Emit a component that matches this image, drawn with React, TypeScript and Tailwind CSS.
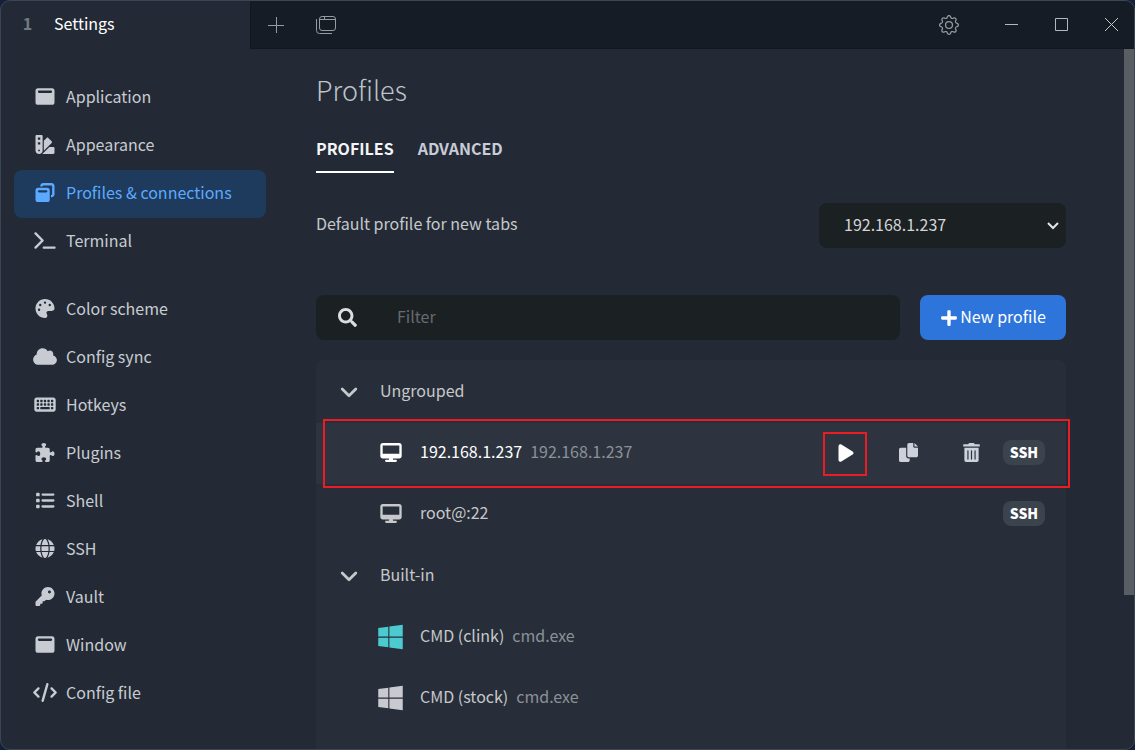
import React from "react";
import {
  FaWindowMaximize, FaSwatchbook, FaWindowRestore, FaTerminal, FaPalette, FaCloud, FaKeyboard,
  FaPuzzlePiece, FaList, FaGlobe, FaKey, FaCode, FaDesktop, FaPlay, FaWindows,
} from "react-icons/fa6";
import { FaPlus, FaSearch, FaTrashAlt } from "react-icons/fa";
import { BsGear } from "react-icons/bs";

type Icon = React.ComponentType<{ className?: string }>;

const navGroups: { label: string; icon: Icon; active?: boolean }[][] = [
  [
    { label: "Application", icon: FaWindowMaximize },
    { label: "Appearance", icon: FaSwatchbook },
    { label: "Profiles & connections", icon: FaWindowRestore, active: true },
    { label: "Terminal", icon: FaTerminal },
  ],
  [
    { label: "Color scheme", icon: FaPalette },
    { label: "Config sync", icon: FaCloud },
    { label: "Hotkeys", icon: FaKeyboard },
    { label: "Plugins", icon: FaPuzzlePiece },
    { label: "Shell", icon: FaList },
    { label: "SSH", icon: FaGlobe },
    { label: "Vault", icon: FaKey },
    { label: "Window", icon: FaWindowMaximize },
    { label: "Config file", icon: FaCode },
  ],
];

function ChevronIcon() {
  return (
    <svg viewBox="0 0 18 18" className="size-[18px]" fill="none" stroke="currentColor" strokeWidth="2.8" strokeLinecap="round" strokeLinejoin="round">
      <path d="M2.2 6L9 12.8L15.8 6" />
    </svg>
  );
}

function CopyIcon() {
  return (
    <svg viewBox="0 0 512 512" className="size-[19px]" fill="currentColor">
      <path d="M384 96V0H272c-26.5 0-48 21.5-48 48v288c0 26.5 21.5 48 48 48h192c26.5 0 48-21.5 48-48V128h-96c-17.6 0-32-14.4-32-32zM416 0v96h96L416 0zM192 352V128H48c-26.5 0-48 21.5-48 48v288c0 26.5 21.5 48 48 48h192c26.5 0 48-21.5 48-48v-48h-32c-35.3 0-64-28.7-64-64z" />
    </svg>
  );
}

function TitleBar() {
  return (
    <header className="flex h-12 shrink-0">
      <div className="flex w-[249px] shrink-0 items-center pb-1">
        <span className="w-[53px] text-center text-base font-bold text-[#737a80]">1</span>
        <span className="text-base text-[#ffffff]">Settings</span>
      </div>
      <div className="flex grow items-center border-b border-l border-[#14171b] bg-[#151c26] text-[#969ba1]">
        <button aria-label="New tab" className="flex h-full w-[50px] items-center justify-center">
          <svg viewBox="0 0 16 16" className="size-4" fill="none" stroke="currentColor" strokeWidth="1">
            <path d="M8.5 0v16M0 8.5h16" />
          </svg>
        </button>
        <button aria-label="Profiles" className="flex h-full w-[50px] items-center justify-center">
          <svg viewBox="0 0 20 18" className="h-[18px] w-5" fill="none" stroke="currentColor" strokeWidth="1">
            <rect x="3.5" y="0.5" width="16" height="14" rx="2.5" />
            <path d="M3.5 3.500h16M8.5 .5v3M.5 3v11.5a3 3 0 0 0 3 3H16" />
          </svg>
        </button>
        <div className="grow" />
        <button aria-label="Settings" className="flex h-full w-[74px] items-center justify-center">
          <BsGear className="size-5" />
        </button>
        <button aria-label="Minimize" className="flex h-full w-[50px] items-center justify-center">
          <svg viewBox="0 0 13 13" className="size-[13px]" stroke="#b4b7bb"><path d="M0 6.5h13" /></svg>
        </button>
        <button aria-label="Maximize" className="flex h-full w-[50px] items-center justify-center">
          <svg viewBox="0 0 13 13" className="size-[13px]" fill="none" stroke="#b4b7bb"><path d="M.5 .5h12v12H.5z" /></svg>
        </button>
        <button aria-label="Close" className="flex h-full w-[48px] items-center justify-center pl-0.5">
          <svg viewBox="0 0 13 13" className="size-[13px]" stroke="#c4c7ca"><path d="M0 0l13 13M13 0L0 13" /></svg>
        </button>
      </div>
    </header>
  );
}

function Sidebar() {
  return (
    <nav className="flex w-[265px] shrink-0 flex-col gap-5 pt-[25px] pl-[13px]">
      {navGroups.map((group, i) => (
        <ul key={i}>
          {group.map(({ label, icon: I, active }) => (
            <li key={label}>
              <a
                href="#"
                className={
                  active
                    ? "flex h-12 items-center gap-2 rounded-lg bg-[#1e3a5c] pb-1 pl-[18px] text-[#5caaff]"
                    : "flex h-12 items-center gap-2 pb-1 pl-[18px] text-[#c8ccd2]"
                }
              >
                <span className="flex w-[26px] shrink-0 justify-center"><I className="h-[19px] w-6" /></span>
                <span>{label}</span>
              </a>
            </li>
          ))}
        </ul>
      ))}
    </nav>
  );
}

function GroupHeader({ label }: { label: string }) {
  return (
    <button className="flex h-[62px] w-full items-center gap-[22px] pl-6 text-left text-[#c6c8ca]">
      <ChevronIcon />
      <span className="pb-1">{label}</span>
    </button>
  );
}

function Badge() {
  return (
    <span className="mb-0.5 flex h-[25px] w-[42px] items-center justify-center rounded-lg bg-[#3b434d] pb-0.5 text-sm font-black text-white">
      SSH
    </span>
  );
}

function ProfileRow(props: {
  name: string; detail?: string; icon: Icon; iconClass: string; ssh?: boolean; selected?: boolean;
}) {
  const { name, detail, icon: I, iconClass, ssh, selected } = props;
  return (
    <li
      className={
        selected
          ? "relative flex h-[61px] items-center bg-[#2d343f] pr-[21px] pl-[61px] text-white"
          : "flex h-[61px] items-center pr-[21px] pl-[61px] text-[#c6c8ca]"
      }
    >
      <span className="mr-4 flex w-[27px] justify-center pb-0.5"><I className={iconClass} /></span>
      <span className="pb-1.5">{name}</span>
      {detail && <span className="ml-2 pb-1.5 text-[#8c9198]">{detail}</span>}
      <div className="ml-auto flex items-center">
        {selected && (
          <>
            <button aria-label="Run" className="relative flex h-11 w-[62px] items-center justify-center pb-0.5">
              <FaPlay className="size-5" />
              <span className="absolute inset-y-0 left-2 w-11 border-2 border-[#ec1c24]" />
            </button>
            <button aria-label="Duplicate" className="flex h-11 w-[62px] items-center justify-center pb-0.5 text-[#cdd1da]">
              <CopyIcon />
            </button>
            <button aria-label="Delete" className="flex h-11 w-[64px] items-center justify-center pb-0.5 text-[#cdd1da]">
              <FaTrashAlt className="size-[19px]" />
            </button>
          </>
        )}
        {ssh && <Badge />}
      </div>
      {selected && <span className="pointer-events-none absolute -top-1 -right-1 -bottom-1 left-[7px] border-2 border-[#ec1c24]" />}
    </li>
  );
}

function Content() {
  return (
    <main className="flex min-w-0 grow flex-col overflow-hidden pr-[58px] pl-[50px]">
      <h1 className="mt-[23px] text-[27px] leading-9 font-light text-[#bcc3ca]">Profiles</h1>
      <div role="tablist" className="mt-[17px] flex shrink-0 gap-6 font-bold">
        <button role="tab" aria-selected="true" className="h-12 border-b-2 border-white text-[#f4f5f6]">PROFILES</button>
        <button role="tab" aria-selected="false" className="h-12 border-b-2 border-transparent text-[#c8ccd8]">ADVANCED</button>
      </div>
      <div className="mt-[30px] flex shrink-0 items-center justify-between">
        <label htmlFor="default-profile" className="pb-1.5 text-[#c6c8ca]">Default profile for new tabs</label>
        <div className="relative">
          <select
            id="default-profile"
            className="h-[45px] w-[247px] appearance-none rounded-lg bg-[#1b2023] pb-1 pl-[25px] text-[#d4d5d6]"
          >
            <option>192.168.1.237</option>
          </select>
          <svg viewBox="0 0 12 8" className="pointer-events-none absolute top-[19px] right-[7px] h-2 w-3" fill="none" stroke="#e4e5e6" strokeWidth="2">
            <path d="M1 1l5 5 5-5" />
          </svg>
        </div>
      </div>
      <div className="mt-[47px] flex shrink-0 gap-5">
        <label className="flex h-[45px] min-w-0 grow items-center gap-10 rounded-lg bg-[#1b2023] pl-[22px]">
          <FaSearch className="size-[19px] shrink-0 text-[#dcddde]" />
          <input aria-label="Filter" placeholder="Filter" className="min-w-0 grow bg-transparent pb-1 outline-none placeholder:text-[#666b70]" />
        </label>
        <button className="flex h-[45px] w-[146px] shrink-0 items-center justify-center gap-0.5 rounded-lg bg-[#2e75db] text-white">
          <FaPlus className="size-[18px]" />
          <span className="pb-1">New profile</span>
        </button>
      </div>
      <section className="mt-5 grow rounded-t-lg bg-[#272e39] pt-px">
        <GroupHeader label="Ungrouped" />
        <ul>
          <ProfileRow name="192.168.1.237" detail="192.168.1.237" icon={FaDesktop} iconClass="h-[19px] w-[22px]" ssh selected />
          <ProfileRow name="root@:22" icon={FaDesktop} iconClass="h-[19px] w-[22px]" ssh />
        </ul>
        <GroupHeader label="Built-in" />
        <ul>
          <ProfileRow name="CMD (clink)" detail="cmd.exe" icon={FaWindows} iconClass="size-7 text-[#4bcbcf]" />
          <ProfileRow name="CMD (stock)" detail="cmd.exe" icon={FaWindows} iconClass="size-7 text-[#c8cad0]" />
        </ul>
      </section>
    </main>
  );
}

export default function App() {
  return (
    <div className="h-screen bg-[#141f3c] font-['Noto_Sans_CJK_SC',sans-serif] text-base leading-6">
      <div className="flex h-full flex-col overflow-hidden rounded-[10px] border border-[#3b4655] bg-[#232a35]">
        <TitleBar />
        <div className="flex min-h-0 grow">
          <Sidebar />
          <Content />
          <div className="w-2.5 shrink-0">
            <div className="h-[78%] bg-[#585e63]" />
          </div>
        </div>
      </div>
    </div>
  );
}
